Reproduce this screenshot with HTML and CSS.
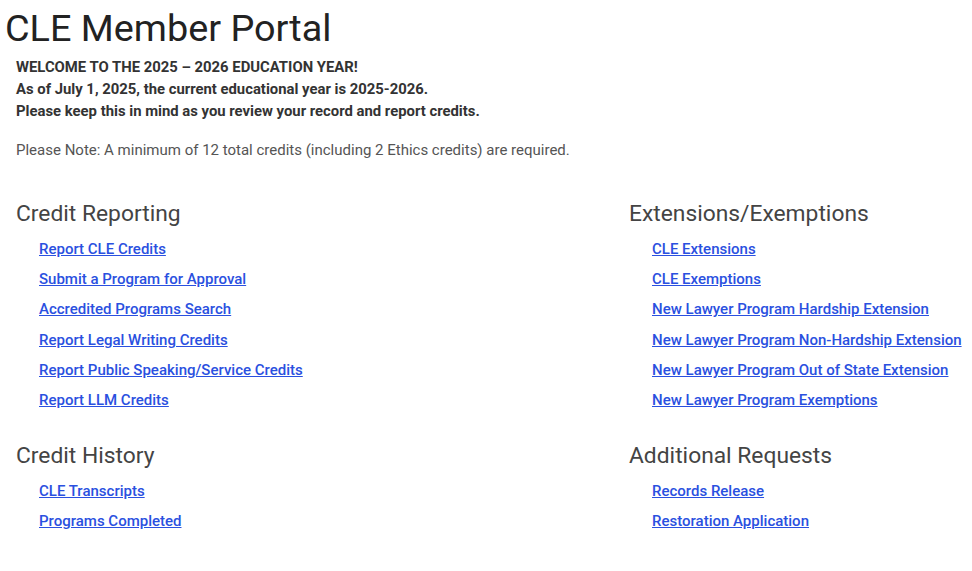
FILE: index.html
```html
<!DOCTYPE html>
<html>
<head>
<meta charset="utf-8">
<link rel="stylesheet" href="styles.css">
</head>
<body>
<h1 class="title">CLE Member Portal</h1>
<div class="intro">
  <p class="welcome">WELCOME TO THE 2025 – 2026 EDUCATION YEAR!<br>As of July 1, 2025, the current educational year is 2025-2026.<br>Please keep this in mind as you review your record and report credits.</p>
  <p class="note">Please Note: A minimum of 12 total credits (including 2 Ethics credits) are required.</p>
</div>
<div class="grid">
  <section class="group">
    <h2>Credit Reporting</h2>
    <ul>
      <li><a href="#">Report CLE Credits</a></li>
      <li><a href="#">Submit a Program for Approval</a></li>
      <li><a href="#">Accredited Programs Search</a></li>
      <li><a href="#">Report Legal Writing Credits</a></li>
      <li><a href="#">Report Public Speaking/Service Credits</a></li>
      <li><a href="#">Report LLM Credits</a></li>
    </ul>
  </section>
  <section class="group">
    <h2>Extensions/Exemptions</h2>
    <ul>
      <li><a href="#">CLE Extensions</a></li>
      <li><a href="#">CLE Exemptions</a></li>
      <li><a href="#">New Lawyer Program Hardship Extension</a></li>
      <li><a href="#">New Lawyer Program Non-Hardship Extension</a></li>
      <li><a href="#">New Lawyer Program Out of State Extension</a></li>
      <li><a href="#">New Lawyer Program Exemptions</a></li>
    </ul>
  </section>
  <section class="group">
    <h2>Credit History</h2>
    <ul>
      <li><a href="#">CLE Transcripts</a></li>
      <li><a href="#">Programs Completed</a></li>
    </ul>
  </section>
  <section class="group">
    <h2>Additional Requests</h2>
    <ul>
      <li><a href="#">Records Release</a></li>
      <li><a href="#">Restoration Application</a></li>
    </ul>
  </section>
</div>
</body>
</html>
```
FILE: styles.css
```css
html, body {
  margin: 0;
  padding: 0;
  background: #fff;
}
body {
  font-family: Roboto, "Liberation Sans", sans-serif;
  color: #333;
  width: 972px;
  overflow: hidden;
}
.title {
  margin: 0;
  padding: 6px 0 0 5px;
  font-size: 37.8px;
  font-weight: 400;
  line-height: 44px;
  color: #222;
}
.intro {
  padding: 6px 0 0 16px;
}
.welcome {
  margin: 0;
  font-size: 14.85px;
  font-weight: 700;
  line-height: 22px;
  color: #333;
}
.note {
  margin: 17px 0 0 0;
  font-size: 15px;
  line-height: 22px;
  color: #555;
}
.grid {
  display: grid;
  grid-template-columns: 613px 1fr;
  padding: 39px 0 0 16px;
  row-gap: 27px;
}
.group h2 {
  margin: 0;
  font-size: 22.8px;
  font-weight: 400;
  line-height: 28px;
  color: #444;
}
.group ul {
  list-style: none;
  margin: 6px 0 0 0;
  padding: 0 0 0 23px;
}
.group li {
  line-height: 30.2px;
  font-size: 15px;
}
.group a {
  color: #2a50e0;
  font-weight: 500;
  text-decoration: underline;
}
```
